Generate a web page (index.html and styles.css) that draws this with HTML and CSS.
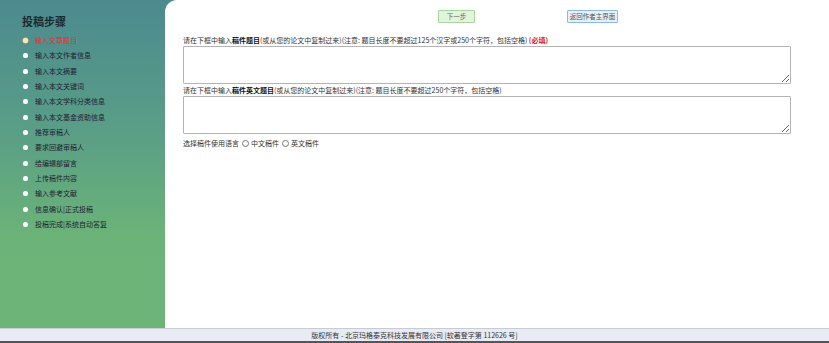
FILE: index.html
```html
<!DOCTYPE html>
<html lang="zh">
<head>
<meta charset="utf-8">
<title>投稿步骤</title>
<link rel="stylesheet" href="styles.css">
</head>
<body>
<div class="page">
  <aside class="sidebar">
    <h1 class="side-title">投稿步骤</h1>
    <ul class="steps">
      <li class="step current">输入文章题目</li>
      <li class="step">输入本文作者信息</li>
      <li class="step">输入本文摘要</li>
      <li class="step">输入本文关键词</li>
      <li class="step">输入本文学科分类信息</li>
      <li class="step">输入本文基金资助信息</li>
      <li class="step">推荐审稿人</li>
      <li class="step">要求回避审稿人</li>
      <li class="step">给编辑部留言</li>
      <li class="step">上传稿件内容</li>
      <li class="step">输入参考文献</li>
      <li class="step">信息确认|正式投稿</li>
      <li class="step">投稿完成|系统自动答复</li>
    </ul>
  </aside>
  <main class="content">
    <div class="toolbar">
      <button class="btn btn-next" type="button">下一步</button>
      <button class="btn btn-back" type="button">返回作者主界面</button>
    </div>
    <p class="label">请在下框中输入<b>稿件题目</b>(或从您的论文中复制过来)(注意: 题目长度不要超过125个汉字或250个字符，包括空格) <span class="required">(必填)</span></p>
    <textarea class="field"></textarea>
    <p class="label">请在下框中输入<b>稿件英文题目</b>(或从您的论文中复制过来)(注意: 题目长度不要超过250个字符，包括空格)</p>
    <textarea class="field"></textarea>
    <div class="lang">
      <span>选择稿件使用语言</span>
      <label class="opt"><input type="radio" name="lang"> 中文稿件</label>
      <label class="opt"><input type="radio" name="lang"> 英文稿件</label>
    </div>
  </main>
</div>
<footer class="footer">版权所有 - 北京玛格泰克科技发展有限公司 [软著登字第 112626 号]</footer>
</body>
</html>
```
FILE: styles.css
```css
* { box-sizing: border-box; }
html, body { margin: 0; padding: 0; }
body {
  width: 829px;
  height: 343px;
  overflow: hidden;
  font-family: "Noto Sans CJK SC", "Liberation Sans", sans-serif;
  font-size: 7px;
  color: #333;
  background: #fff;
}
.page {
  display: flex;
  height: 328px;
  background: linear-gradient(180deg, #4c8a8f 0%, #5a9e86 40%, #6bb378 72%, #6db577 100%);
}
.sidebar {
  width: 165px;
  flex: none;
  padding: 13px 0 0 22px;
}
.side-title {
  margin: 0 0 4px 0;
  font-size: 11px;
  line-height: 16px;
  font-weight: bold;
  color: #1d2a2c;
}
.steps {
  list-style: none;
  margin: 0;
  padding: 0;
}
.step {
  position: relative;
  height: 15.35px;
  line-height: 15px;
  padding-left: 13px;
  color: #223;
  font-size: 7px;
}
.step::before {
  content: "";
  position: absolute;
  left: 1px;
  top: 5px;
  width: 5px;
  height: 5px;
  border-radius: 50%;
  background: #fff;
  box-shadow: 0 0 1px #9ab;
}
.step.current { color: #e0303a; }
.step.current::before {
  background: #fbe9b8;
  box-shadow: 0 0 0 0.5px #e8b860;
}
.content {
  flex: 1;
  background: #fff;
  border-top-left-radius: 12px;
  padding: 10px 38px 0 18px;
}
.toolbar {
  display: flex;
  height: 14px;
  margin-bottom: 11px;
}
.btn {
  height: 13px;
  padding: 0;
  font-family: inherit;
  font-size: 6.5px;
  line-height: 11px;
  color: #666;
  border-radius: 1px;
}
.btn-next {
  width: 37px;
  margin-left: 255px;
  background: #e2f4dc;
  border: 1px solid #a6d89c;
}
.btn-back {
  width: 51px;
  margin-left: 92px;
  background: #e6f0fa;
  border: 1px solid #8cbbe0;
  color: #555;
}
.label {
  margin: 0;
  line-height: 10px;
  color: #333;
}
.label b { color: #111; }
.required { color: #e02020; font-weight: bold; }
.field {
  display: block;
  width: 608px;
  height: 38px;
  margin: 1px 0 1px 0;
  border: 1px solid #b4b4b4;
  border-radius: 1px;
  background: #fff;
  resize: both;
}
.lang {
  display: flex;
  align-items: center;
  gap: 3px;
  margin-top: 4px;
  height: 10px;
  color: #333;
}
.opt {
  display: flex;
  align-items: center;
  gap: 2px;
}
.opt input {
  width: 7px;
  height: 7px;
  margin: 0;
}
.footer {
  height: 15px;
  background: #e8eaf4;
  border-top: 1px solid #c9cbd4;
  border-bottom: 2px solid #555;
  text-align: center;
  font-size: 7px;
  line-height: 12px;
  color: #333;
}
```
